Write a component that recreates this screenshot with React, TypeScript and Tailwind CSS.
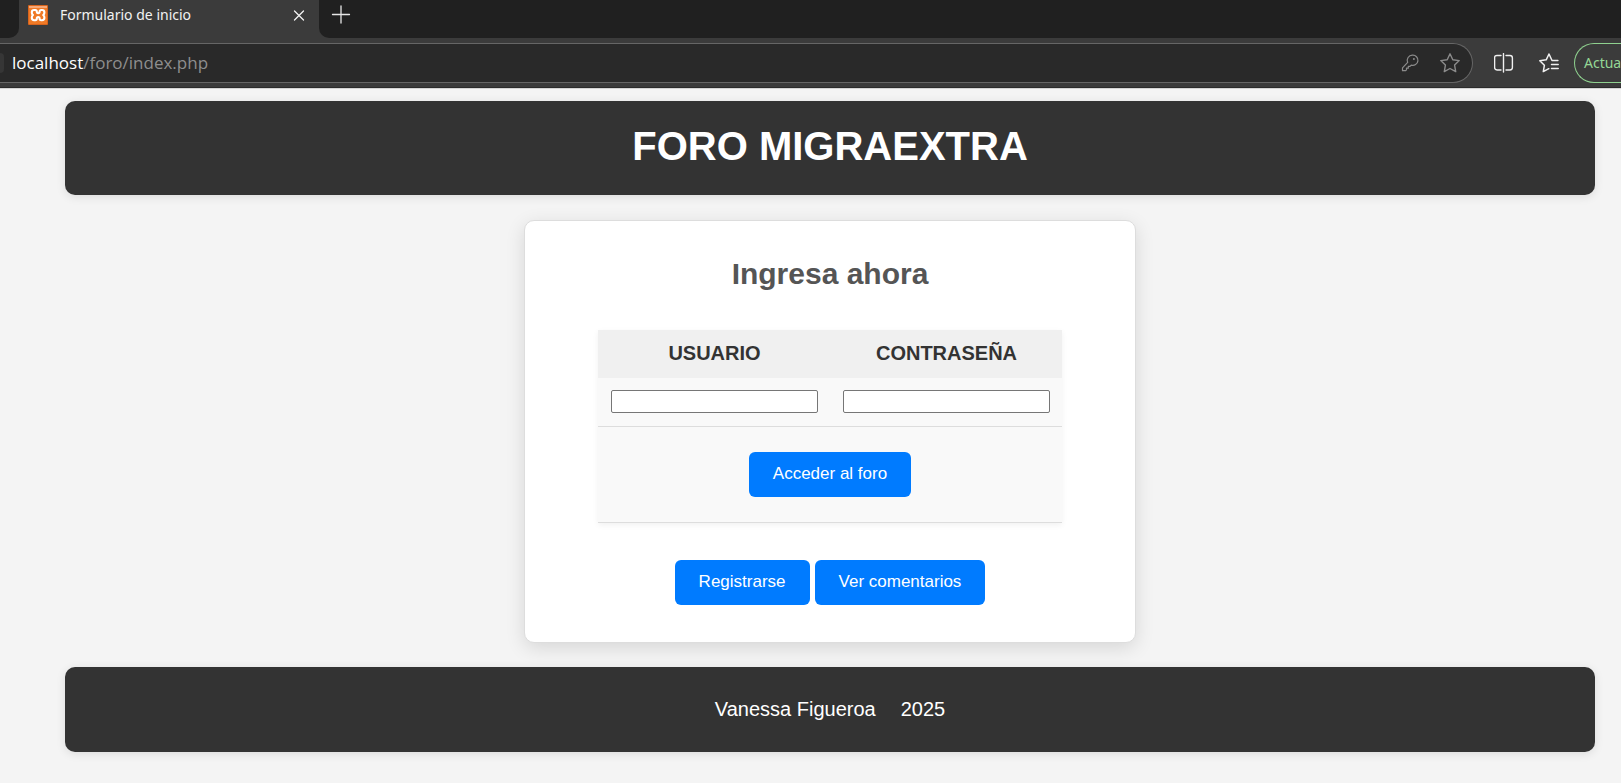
import type { ReactNode } from "react";

function Favicon() {
  return (
    <svg viewBox="0 0 20 20" className="size-5 shrink-0" aria-hidden="true">
      <rect width="20" height="20" rx="1" fill="#d9641c" />
      <rect x="1" y="1" width="18" height="18" fill="#f07a26" />
      <rect x="1" y="1" width="18" height="2" fill="#f5a878" />
      <path
        d="M6.2 5H7.2Q8.8 5 8.8 6.6Q8.8 8.2 10.2 8.2Q11.6 8.2 11.6 6.6Q11.6 5 13.2 5H14Q16.4 5 16.4 7.4Q16.4 9 15.2 10Q16.4 11 16.4 12.8Q16.4 15.2 14 15.2H13.2Q11.6 15.2 11.6 13.6Q11.6 12 10.2 12Q8.8 12 8.8 13.6Q8.8 15.2 7.2 15.2H6.2Q3.8 15.2 3.8 12.8Q3.8 11 5 10Q3.8 9 3.8 7.4Q3.8 5 6.2 5Z"
        fill="none"
        stroke="#fff"
        strokeWidth="2.1"
        strokeLinejoin="round"
      />
    </svg>
  );
}

function Icon({ children, className }: { children: ReactNode; className: string }) {
  return (
    <svg
      viewBox="0 0 20 20"
      fill="none"
      stroke="currentColor"
      strokeLinejoin="round"
      strokeLinecap="round"
      className={className}
      aria-hidden="true"
    >
      {children}
    </svg>
  );
}

function TabStrip() {
  return (
    <div className="flex h-[38px] bg-[#3b3b3b]">
      <div className="w-[19px] rounded-br-[10px] bg-[#202020]" />
      <div className="flex w-[300px] items-start gap-3 pt-[5px] pr-[10px] pl-[9px] text-[#f2f2f2]">
        <Favicon />
        <span className="flex-1 text-[14px] leading-5">Formulario de inicio</span>
        <button type="button" aria-label="Cerrar pestaña" className="flex size-5 items-center justify-center">
          <Icon className="size-5">
            <path d="M5.5 6L14.5 15M14.5 6L5.5 15" strokeWidth="1.3" />
          </Icon>
        </button>
      </div>
      <div className="flex flex-1 items-start rounded-bl-[10px] bg-[#202020] pt-[5px] pl-3">
        <button type="button" aria-label="Nueva pestaña" className="text-[#e6e6e6]">
          <Icon className="size-5">
            <path d="M1.5 9.5H18.5M10 1V18" strokeWidth="1.3" />
          </Icon>
        </button>
      </div>
    </div>
  );
}

function Toolbar() {
  return (
    <div className="flex h-[50px] items-center border-b border-[#2b2b2b] bg-[#3b3b3b]">
      <div className="flex h-10 flex-1 items-center rounded-r-full border-y border-r border-[#666] bg-[#292929] pr-3">
        <span className="h-5 w-1 rounded-r-full bg-[#363636]" />
        <span className="flex-1 pl-2 text-[17px] leading-6 text-[#8e8e8e] font-['Open_Sans','Noto_Sans',sans-serif]">
          <span className="text-white">localhost</span>/foro/index.php
        </span>
        <div className="flex items-center gap-5 text-[#8b8b8b]">
          <button type="button" aria-label="Contraseñas">
            <Icon className="size-5">
              <path
                d="M12.4 2.2a5.1 5.1 0 1 1-1.2 9.9l-1.2 1.3H8.3v1.8H6.5v1.7l-.8.8H2.5v-2.9l5.2-5.4a5.1 5.1 0 0 1 4.7-7.2Z"
                strokeWidth="1.2"
              />
              <circle cx="13.9" cy="5.9" r="1" fill="currentColor" stroke="none" />
            </Icon>
          </button>
          <button type="button" aria-label="Agregar a favoritos">
            <Icon className="size-5">
              <path
                d="M10 .8L12.8 6.7L19.2 7.6L14.6 12.1L15.7 18.6L10 15.5L4.3 18.6L5.4 12.1L.8 7.6L7.2 6.7Z"
                strokeWidth="1.4"
              />
            </Icon>
          </button>
        </div>
      </div>
      <div className="flex items-center gap-[25px] pr-[15px] pl-[21px] text-[#f0f0f0]">
        <button type="button" aria-label="Pantalla dividida">
          <Icon className="size-5">
            <path
              d="M7 2.5H3Q.6 2.5 .6 4.9V14.6Q.6 17 3 17H7M12 2.5H16Q18.4 2.5 18.4 4.9V14.6Q18.4 17 16 17H12M9.5 .6V19"
              strokeWidth="1.4"
            />
          </Icon>
        </button>
        <button type="button" aria-label="Favoritos">
          <Icon className="size-5">
            <path
              d="M18.9 7.5H13L10 1L7.2 6.8L.8 7.7L5.4 12.2L4.3 18.6L9.8 15.7M12.5 11.5H19.2M12.5 15.5H19.2"
              strokeWidth="1.5"
            />
          </Icon>
        </button>
      </div>
      <button
        type="button"
        className="h-10 w-[47px] overflow-hidden rounded-l-full border-y border-l border-[#8fd18f] pl-[9px] text-left text-[14px] whitespace-nowrap text-[#95d795]"
      >
        Actua
      </button>
    </div>
  );
}

function BlueButton({ children, type = "button" }: { children: string; type?: "button" | "submit" }) {
  return (
    <button type={type} className="rounded-md bg-[#007bff] px-6 pt-3 pb-[13px] text-[17px] leading-5 text-white">
      {children}
    </button>
  );
}

function LoginCard() {
  return (
    <form
      onSubmit={(event) => event.preventDefault()}
      className="mx-auto flex w-2/5 flex-col items-center rounded-[10px] border border-[#ddd] bg-white pt-[35px] pb-[37px] shadow-[0_5px_19px_rgba(0,0,0,0.12)]"
    >
      <h2 className="text-[30px] leading-9 font-bold text-[#555]">Ingresa ahora</h2>
      <table className="mt-[38px] border-collapse bg-[#f9f9f9] shadow-[0_2px_6px_rgba(0,0,0,0.06)]">
        <thead>
          <tr className="bg-[#f0f0f0] text-[20px] leading-6 text-[#333]">
            <th className="px-3 pt-[11px] pb-[13px] font-bold">
              <label htmlFor="usuario">USUARIO</label>
            </th>
            <th className="px-3 pt-[11px] pb-[13px] font-bold">
              <label htmlFor="clave">CONTRASEÑA</label>
            </th>
          </tr>
        </thead>
        <tbody>
          <tr className="border-b border-[#ddd]">
            <td className="px-[13px] pt-3 pb-[13px]">
              <input
                id="usuario"
                type="text"
                className="block h-[23px] w-[207px] rounded-xs border border-[#767676] bg-white px-1 text-[16px]"
              />
            </td>
            <td className="px-3 pt-3 pb-[13px]">
              <input
                id="clave"
                type="password"
                className="block h-[23px] w-[207px] rounded-xs border border-[#767676] bg-white px-1 text-[16px]"
              />
            </td>
          </tr>
          <tr className="border-b border-[#ddd]">
            <td colSpan={2} className="py-[25px] text-center">
              <BlueButton type="submit">Acceder al foro</BlueButton>
            </td>
          </tr>
        </tbody>
      </table>
      <div className="mt-[37px] flex gap-[5px]">
        <BlueButton>Registrarse</BlueButton>
        <BlueButton>Ver comentarios</BlueButton>
      </div>
    </form>
  );
}

export default function App() {
  return (
    <div className="flex min-h-screen flex-col bg-[#f4f4f4]">
      <div className="font-['Noto_Sans','Open_Sans',sans-serif]">
        <TabStrip />
        <Toolbar />
      </div>
      <div className="flex flex-1 flex-col border-t border-[#d4d4d4] pt-3 pr-[26px] pb-5 pl-[65px] font-['Liberation_Sans',Arial,sans-serif]">
        <header className="rounded-[10px] bg-[#333] pt-[22px] pb-[26px] text-center shadow-[0_2px_10px_rgba(0,0,0,0.1)]">
          <h1 className="text-[40px] leading-[46px] font-bold text-white">FORO MIGRAEXTRA</h1>
        </header>
        <main className="pt-[25px] pb-6">
          <LoginCard />
        </main>
        <footer className="flex justify-center gap-[25px] rounded-[10px] bg-[#333] pt-[30px] pb-[31px] text-[20px] leading-6 text-white shadow-[0_2px_10px_rgba(0,0,0,0.1)]">
          <span>Vanessa Figueroa</span>
          <span>2025</span>
        </footer>
      </div>
    </div>
  );
}
